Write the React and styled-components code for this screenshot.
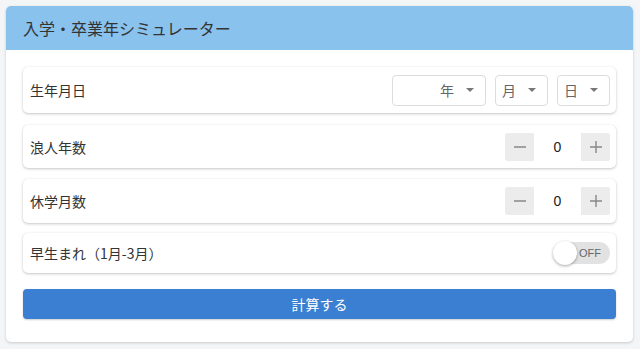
import React, { useState } from "react";
import styled, { createGlobalStyle } from "styled-components";

const GlobalStyle = createGlobalStyle`
  * { box-sizing: border-box; }
  body {
    margin: 0;
    background: #f3f5f7;
    font-family: "Noto Sans CJK JP", "Noto Sans", sans-serif;
    color: #333;
  }
`;

const Page = styled.div`
  padding: 6px;
`;

const Card = styled.div`
  width: 627px;
  background: #fff;
  border-radius: 5px;
  box-shadow: 0 1px 3px rgba(0, 0, 0, 0.18);
  overflow: hidden;
`;

const Header = styled.div`
  height: 44px;
  background: #8ac2ee;
  display: flex;
  align-items: center;
  padding: 0 17px;
  font-size: 16px;
  color: #333;
`;

const Body = styled.div`
  padding: 17px 17px 23px;
  display: flex;
  flex-direction: column;
`;

const Row = styled.div`
  height: ${(p) => p.h}px;
  margin-bottom: ${(p) => p.mb}px;
  display: flex;
  align-items: center;
  justify-content: space-between;
  padding: 0 6px 0 7px;
  background: #fff;
  border-radius: 5px;
  box-shadow: 0 1px 3px rgba(0, 0, 0, 0.22), 0 0 1px rgba(0, 0, 0, 0.08);
  font-size: 14px;
`;

const Label = styled.span`
  font-size: 14px;
  color: #333;
`;

const Selects = styled.div`
  display: flex;
  gap: 9px;
`;

const SelectBox = styled.div`
  width: ${(p) => p.w}px;
  height: 31px;
  border: 1px solid #dcdcdc;
  border-radius: 4px;
  display: flex;
  align-items: center;
  justify-content: flex-end;
  padding-right: 11px;
  gap: 12px;
  font-size: 14px;
  color: #666;
`;

const Caret = styled.span`
  width: 0;
  height: 0;
  border-left: 4px solid transparent;
  border-right: 4px solid transparent;
  border-top: 4px solid #777;
`;

const Stepper = styled.div`
  display: flex;
  height: 28px;
  border-radius: 3px;
  overflow: hidden;
  background: #ececec;
`;

const StepButton = styled.button`
  width: 29px;
  border: none;
  background: #ececec;
  padding: 0;
  display: flex;
  align-items: center;
  justify-content: center;
  cursor: pointer;
`;

const StepValue = styled.div`
  width: 47px;
  background: #fff;
  display: flex;
  align-items: center;
  justify-content: center;
  font-size: 14px;
  font-family: "Liberation Sans", Arial, sans-serif;
  color: #222;
`;

const Toggle = styled.div`
  position: relative;
  width: 56px;
  height: 22px;
  border-radius: 11px;
  background: #e2e2e2;
  display: flex;
  align-items: center;
  justify-content: flex-end;
  padding-right: 9px;
  font-size: 11px;
  font-family: "Liberation Sans", Arial, sans-serif;
  color: #666;
`;

const Knob = styled.span`
  position: absolute;
  left: -1px;
  top: -1px;
  width: 24px;
  height: 24px;
  border-radius: 50%;
  background: #fff;
  box-shadow: 0 1px 3px rgba(0, 0, 0, 0.35);
`;

const CalcButton = styled.button`
  margin-top: 6px;
  height: 30px;
  border: none;
  border-radius: 4px;
  background: #3a7fd2;
  color: #fff;
  font-size: 14px;
  font-family: "Noto Sans CJK JP", sans-serif;
  box-shadow: 0 1px 2px rgba(0, 0, 0, 0.2);
  cursor: pointer;
`;

const Minus = () => (
  <svg width="14" height="14" viewBox="0 0 14 14">
    <path d="M1 7h12" stroke="#888" strokeWidth="1.4" />
  </svg>
);

const Plus = () => (
  <svg width="14" height="14" viewBox="0 0 14 14">
    <path d="M1 7h12M7 1v12" stroke="#888" strokeWidth="1.4" />
  </svg>
);

const Counter = ({ value, onChange }) => (
  <Stepper>
    <StepButton onClick={() => onChange(Math.max(0, value - 1))}>
      <Minus />
    </StepButton>
    <StepValue>{value}</StepValue>
    <StepButton onClick={() => onChange(value + 1)}>
      <Plus />
    </StepButton>
  </Stepper>
);

export default function App() {
  const [ronin, setRonin] = useState(0);
  const [kyugaku, setKyugaku] = useState(0);

  return (
    <Page>
      <GlobalStyle />
      <Card>
        <Header>入学・卒業年シミュレーター</Header>
        <Body>
          <Row h={46} mb={12}>
            <Label>生年月日</Label>
            <Selects>
              <SelectBox w={94}>
                年<Caret />
              </SelectBox>
              <SelectBox w={53}>
                月<Caret />
              </SelectBox>
              <SelectBox w={53}>
                日<Caret />
              </SelectBox>
            </Selects>
          </Row>
          <Row h={43} mb={11}>
            <Label>浪人年数</Label>
            <Counter value={ronin} onChange={setRonin} />
          </Row>
          <Row h={44} mb={10}>
            <Label>休学月数</Label>
            <Counter value={kyugaku} onChange={setKyugaku} />
          </Row>
          <Row h={40} mb={10}>
            <Label>早生まれ（1月-3月）</Label>
            <Toggle>
              <Knob />
              OFF
            </Toggle>
          </Row>
          <CalcButton>計算する</CalcButton>
        </Body>
      </Card>
    </Page>
  );
}
